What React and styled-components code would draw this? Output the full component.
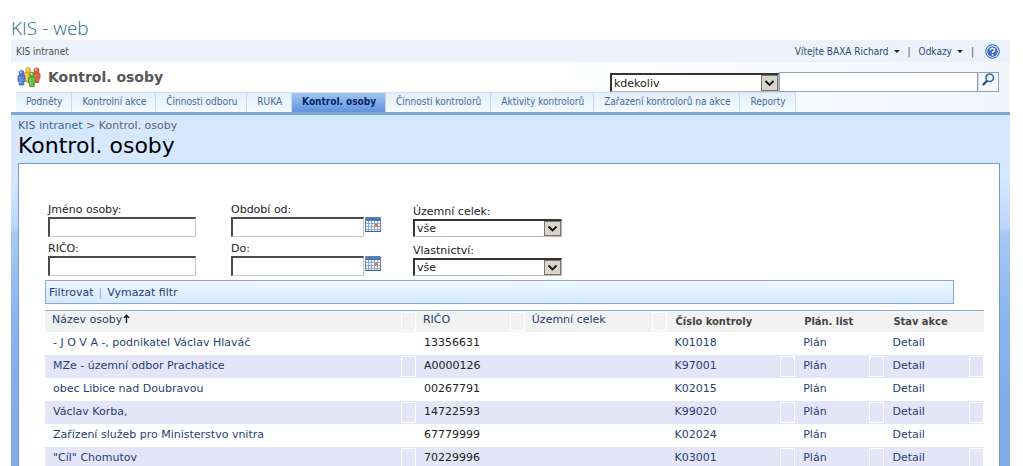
import React from 'react'
import styled, { createGlobalStyle, ThemeProvider } from 'styled-components'

const theme = {
  link: '#1f3f74',
  muted: '#4c4c4c',
  tab: '#47699a',
  page: '#d6e8ff',
  line: '#6f9dd0',
  sans: "'DejaVu Sans', Verdana, sans-serif",
  narrow: "'DejaVu Sans Condensed', 'DejaVu Sans', Tahoma, sans-serif",
  light: "'Open Sans', 'Segoe UI', sans-serif"
}

const GlobalStyle = createGlobalStyle`
  * {
    box-sizing: border-box;
  }
  html {
    overflow: hidden;
  }
  body {
    background: white;
    color: #222;
    font-family: ${theme.sans};
    font-size: 11px;
    margin: 0;
  }
  a {
    color: inherit;
    text-decoration: none;
  }
  button, input, select {
    border-radius: 0;
    font: inherit;
    margin: 0;
  }
`

const Page = styled.div`
  display: flex;
  flex-direction: column;
  min-height: 100vh;
  padding: 16px 13px 0 11px;
`

const AppName = styled.div`
  color: #236d8e;
  font-family: ${({ theme }) => theme.light};
  font-size: 19px;
  font-weight: 300;
  line-height: 24px;
`

const TopBar = styled.div`
  align-items: center;
  background: #ecf2fc;
  color: ${({ theme }) => theme.muted};
  display: flex;
  font-family: ${({ theme }) => theme.narrow};
  font-size: 10px;
  height: 22px;
  justify-content: space-between;
  padding: 0 10px 0 5px;
`

const UserMenu = styled.div`
  align-items: center;
  color: #34496b;
  display: flex;
  gap: 8px;
`

const MenuButton = styled.button`
  align-items: center;
  background: none;
  border: 0;
  color: inherit;
  display: flex;
  gap: 5px;
  padding: 0;
  &:after {
    border: 3px solid transparent;
    border-bottom: 0;
    border-top-color: #222;
    content: '';
  }
`

const HelpButton = styled.button`
  background: none;
  border: 0;
  display: flex;
  margin-left: 3px;
  padding: 0;
`

const Header = styled.header`
  background: linear-gradient(to right, white 50%, #f1f6fe 100%);
  border-bottom: 3px solid #7ea6d6;
`

const TitleRow = styled.div`
  align-items: center;
  display: flex;
  height: 30px;
  justify-content: space-between;
  padding: 0 11px 0 6px;
`

const SiteTitle = styled.div`
  align-items: center;
  color: #585858;
  display: flex;
  font-size: 14px;
  font-weight: bold;
  gap: 6px;
`

const Search = styled.form`
  align-items: flex-end;
  display: flex;
  margin-top: 10px;
`

const SearchInput = styled.input`
  background: white;
  border: 1px solid #8fa3b8;
  height: 20px;
  width: 199px;
`

const SearchButton = styled.button`
  background: #f6faff;
  border: 1px solid #8fa3b8;
  border-left-color: #c8d8ea;
  display: flex;
  height: 20px;
  padding: 0 2px;
  width: 21px;
`

const Tabs = styled.nav`
  display: flex;
  height: 20px;
  padding-left: 5px;
`

const Tab = styled.a`
  background: ${({ $active }) => $active
    ? 'linear-gradient(to bottom, #a3c5f2, #6193dd)'
    : 'linear-gradient(to bottom, #e3effc, #f4faff)'};
  border-right: 1px solid #c3dbee;
  border-top: 1px solid #d3e2f1;
  color: ${({ $active, theme }) => $active ? '#04246b' : theme.tab};
  font-family: ${({ theme }) => theme.narrow};
  font-size: 10px;
  font-weight: ${({ $active }) => $active ? 'bold' : 'normal'};
  line-height: 18px;
  padding: 0 9px 0 10px;
  white-space: nowrap;
`

const Body = styled.main`
  background: linear-gradient(to bottom, ${({ theme }) => theme.page} 60px, #bdd7f9 112px, #a9c9f4 118px, #8db4ee 200px, #82abea 300px);
  display: flex;
  flex: 1;
  flex-direction: column;
  padding: 4px 10px 0 7px;
`

const Breadcrumb = styled.div`
  color: #5a6472;
  line-height: 14px;
  a {
    color: #3d6598;
  }
`

const Heading = styled.h1`
  color: black;
  font-size: 22px;
  font-weight: normal;
  line-height: 26px;
  margin: 0 0 4px;
`

const Panel = styled.section`
  background: white;
  border: 1px solid ${({ theme }) => theme.line};
  border-bottom: 0;
  flex: 1;
  padding: 39px 15px 0 26px;
`

const Filters = styled.form`
  display: grid;
  gap: 5px 0;
  grid-template-columns: 183px 182px 149px;
  padding-left: 3px;
`

const Field = styled.div`
  display: flex;
  flex-direction: column;
  justify-content: flex-end;
  label {
    line-height: 14px;
  }
`

const DateRow = styled.div`
  display: flex;
  gap: 1px;
`

const TextInput = styled.input`
  background: white;
  border: 1px solid #c8c8c8;
  border-left: 2px solid #4a4a4a;
  border-top: 2px solid #4a4a4a;
  height: 20px;
  width: ${({ $short }) => $short ? 133 : 148}px;
`

const CalendarButton = styled.button`
  background: none;
  border: 0;
  display: flex;
  height: 16px;
  padding: 0;
`

const SelectBox = styled.div`
  display: flex;
  position: relative;
  width: ${({ $wide }) => $wide ? 169 : 149}px;
  select {
    appearance: none;
    background: white;
    border: 1px solid #b8b8b8;
    border-left: 2px solid #333;
    border-top: 2px solid #333;
    color: #222;
    height: ${({ $wide }) => $wide ? 19 : 18}px;
    padding: 0 20px 0 2px;
    width: 100%;
  }
  svg {
    background: #d8d5ca;
    border: 1px solid #77756e;
    bottom: 1px;
    pointer-events: none;
    position: absolute;
    right: 1px;
    top: 2px;
  }
`

const Toolbar = styled.div`
  align-items: center;
  background: linear-gradient(to bottom, #f0f7ff, #d3e8ff);
  border: 1px solid #86a9cc;
  color: ${({ theme }) => theme.link};
  display: flex;
  gap: 5px;
  height: 24px;
  margin: 4px 30px 6px 0;
  padding: 0 3px;
  button {
    background: none;
    border: 0;
    color: inherit;
    padding: 0;
  }
  span {
    color: #8fb0d4;
  }
`

const Table = styled.table`
  border-collapse: collapse;
  border-top: 1px solid #8fb0c8;
  color: ${({ theme }) => theme.link};
  table-layout: fixed;
  width: 100%;
  th, td {
    padding: 0;
    text-align: left;
  }
  th {
    background: #f2f2f2;
    font-weight: normal;
  }
`

const Row = styled.tr`
  background: ${({ $odd }) => $odd ? '#e4e5f8' : 'white'};
`

const Cell = styled.div`
  color: ${({ $plain }) => $plain ? '#222' : 'inherit'};
  display: flex;
  height: ${({ $head }) => $head ? 21 : 23}px;
  justify-content: space-between;
  line-height: ${({ $head }) => $head ? 18 : 21}px;
  padding-left: ${({ $head }) => $head ? 7 : 8}px;
  white-space: nowrap;
`

const BoldCell = styled(Cell)`
  color: #444;
  font-family: ${({ theme }) => theme.narrow};
  font-weight: bold;
  line-height: 22px;
  padding-left: 9px;
`

const Slot = styled.span`
  border: 1px solid white;
  margin: 1px 0;
  width: 15px;
`

const SortArrow = styled.svg`
  margin-left: 1px;
`

const tabs = [
  'Podněty',
  'Kontrolní akce',
  'Činnosti odboru',
  'RUKA',
  'Kontrol. osoby',
  'Činnosti kontrolorů',
  'Aktivity kontrolorů',
  'Zařazení kontrolorů na akce',
  'Reporty'
]

const people = [
  { name: '- J O V A -, podnikatel Václav Hlaváč', ico: '13356631', check: 'K01018' },
  { name: 'MZe - územní odbor Prachatice', ico: 'A0000126', check: 'K97001' },
  { name: 'obec Libice nad Doubravou', ico: '00267791', check: 'K02015' },
  { name: 'Václav Korba,', ico: '14722593', check: 'K99020' },
  { name: 'Zařízení služeb pro Ministerstvo vnitra', ico: '67779999', check: 'K02024' },
  { name: '"Cíl" Chomutov', ico: '70229996', check: 'K03001' }
]

const columns = ['39.5%', '11.6%', '15.1%', '13.7%', '9.5%', '10.6%']

const Person = ({ x, y, fill, edge }) => (
  <g fill={fill} stroke={edge} strokeWidth='0.7' transform={`translate(${x} ${y})`}>
    <path d='M0.5 6.5Q0.5 5.3 1.8 5.3H6.2Q7.5 5.3 7.5 6.5V11.5H6.3V15H1.7V11.5H0.5Z' />
    <circle cx='4' cy='2.9' r='2.5' />
    <circle cx='3.4' cy='2.1' r='0.9' fill='white' fillOpacity='0.7' stroke='none' />
    <path d='M2.6 7V13' stroke='white' strokeOpacity='0.5' />
  </g>
)

const PeopleIcon = () => (
  <svg width='25' height='20' viewBox='0 0 25 20' aria-hidden='true'>
    <Person x={7} y={0} fill='#f5bd3c' edge='#cf8c1e' />
    <Person x={15.5} y={0.5} fill='#e8614a' edge='#bb3a2a' />
    <Person x={0.5} y={3} fill='#5585d2' edge='#2f5ca8' />
    <Person x={11} y={4.5} fill='#6cb93d' edge='#3f8a25' />
  </svg>
)

const HelpIcon = () => (
  <svg width='15' height='15' viewBox='0 0 15 15' aria-hidden='true'>
    <circle cx='7.5' cy='7.5' r='6.8' fill='#dfeafa' stroke='#35579c' />
    <circle cx='7.5' cy='7.5' r='5.2' fill='#3c6fc9' />
    <path d='M5.4 6.2Q5.4 4.2 7.5 4.2T9.6 6Q9.6 7 8.4 7.6Q7.5 8 7.5 9' fill='none' stroke='white' strokeWidth='1.5' />
    <circle cx='7.5' cy='10.8' r='0.9' fill='white' />
  </svg>
)

const SearchIcon = () => (
  <svg width='14' height='14' viewBox='0 0 14 14' aria-hidden='true'>
    <circle cx='8.7' cy='4.8' r='3.8' fill='#e9f5ff' stroke='#35678f' strokeWidth='1.5' />
    <path d='M6 7.8L1.8 12' stroke='#2b4f8c' strokeWidth='2.4' />
  </svg>
)

const CalendarIcon = () => (
  <svg width='16' height='16' viewBox='0 0 16 16' aria-hidden='true'>
    <path d='M0.5 0.5H15.5V14.5H0.5Z' fill='#f4f8fd' stroke='#6482a8' />
    <path d='M1 1H15V4H1Z' fill='#4c7ab8' />
    <path d='M1 6.5H15M1 9.5H15M1 12.5H15M3.5 4V14M6.5 4V14M9.5 4V14M12.5 4V14' stroke='#8fabd0' />
    <path d='M10 7H13V10H10Z' fill='#dd7a48' />
    <path d='M0 14.5H16' stroke='#3e5c88' />
  </svg>
)

const Select = ({ id, label, value, wide }) => (
  <SelectBox $wide={wide}>
    <select id={id} aria-label={label} defaultValue={value}>
      <option>{value}</option>
    </select>
    <svg width='17' height={wide ? 16 : 15} viewBox='0 0 15 13' aria-hidden='true'>
      <path d='M3.5 4.5L7.5 8.5L11.5 4.5' fill='none' stroke='#111' strokeWidth='1.8' />
    </svg>
  </SelectBox>
)

const TextField = ({ id, label }) => (
  <Field>
    <label htmlFor={id}>{label}</label>
    <TextInput id={id} type='text' />
  </Field>
)

const DateField = ({ id, label }) => (
  <Field>
    <label htmlFor={id}>{label}</label>
    <DateRow>
      <TextInput id={id} type='text' $short />
      <CalendarButton type='button' aria-label='Kalendář'><CalendarIcon /></CalendarButton>
    </DateRow>
  </Field>
)

const SelectField = ({ id, label }) => (
  <Field>
    <label htmlFor={id}>{label}</label>
    <Select id={id} value='vše' />
  </Field>
)

const PeopleTable = () => (
  <Table>
    <colgroup>
      {columns.map((width, i) => <col key={i} width={width} />)}
    </colgroup>
    <thead>
      <tr>
        <th>
          <Cell $head>
            <a href='#nazev'>
              Název osoby
              <SortArrow width='7' height='9' viewBox='0 0 7 9' aria-hidden='true'>
                <path d='M3.5 9V1.5M1 4L3.5 1.2L6 4' fill='none' stroke='#111' strokeWidth='1.3' />
              </SortArrow>
            </a>
            <Slot />
          </Cell>
        </th>
        <th><Cell $head><a href='#rico'>RIČO</a><Slot /></Cell></th>
        <th><Cell $head><a href='#celek'>Územní celek</a><Slot /></Cell></th>
        <th><BoldCell $head>Číslo kontroly</BoldCell></th>
        <th><BoldCell $head>Plán. list</BoldCell></th>
        <th><BoldCell $head>Stav akce</BoldCell></th>
      </tr>
    </thead>
    <tbody>
      {people.map(({ name, ico, check }, i) => (
        <Row key={ico} $odd={i % 2 === 1}>
          <td><Cell><a href='#osoba'>{name}</a><Slot /></Cell></td>
          <td><Cell $plain>{ico}</Cell></td>
          <td />
          <td><Cell><a href='#kontrola'>{check}</a><Slot /></Cell></td>
          <td><Cell><a href='#plan'>Plán</a><Slot /></Cell></td>
          <td><Cell><a href='#detail'>Detail</a><Slot /></Cell></td>
        </Row>
      ))}
    </tbody>
  </Table>
)

const App = () => (
  <ThemeProvider theme={theme}>
    <GlobalStyle />
    <Page>
      <AppName>KIS - web</AppName>
      <TopBar>
        <a href='#intranet'>KIS intranet</a>
        <UserMenu>
          <MenuButton type='button'>Vítejte BAXA Richard</MenuButton>
          <span>|</span>
          <MenuButton type='button'>Odkazy</MenuButton>
          <span>|</span>
          <HelpButton type='button' aria-label='Nápověda'><HelpIcon /></HelpButton>
        </UserMenu>
      </TopBar>
      <Header>
        <TitleRow>
          <SiteTitle><PeopleIcon />Kontrol. osoby</SiteTitle>
          <Search>
            <Select label='Oblast hledání' value='kdekoliv' wide />
            <SearchInput type='text' aria-label='Hledat' />
            <SearchButton type='button' aria-label='Hledat'><SearchIcon /></SearchButton>
          </Search>
        </TitleRow>
        <Tabs>
          {tabs.map(tab => <Tab key={tab} href='#tab' $active={tab === 'Kontrol. osoby'}>{tab}</Tab>)}
        </Tabs>
      </Header>
      <Body>
        <Breadcrumb><a href='#intranet'>KIS intranet</a> &gt; Kontrol. osoby</Breadcrumb>
        <Heading>Kontrol. osoby</Heading>
        <Panel>
          <Filters>
            <TextField id='jmeno' label='Jméno osoby:' />
            <DateField id='od' label='Období od:' />
            <SelectField id='celek' label='Územní celek:' />
            <TextField id='rico' label='RIČO:' />
            <DateField id='do' label='Do:' />
            <SelectField id='vlastnictvi' label='Vlastnictví:' />
          </Filters>
          <Toolbar>
            <button type='button'>Filtrovat</button>
            <span>|</span>
            <button type='button'>Vymazat filtr</button>
          </Toolbar>
          <PeopleTable />
        </Panel>
      </Body>
    </Page>
  </ThemeProvider>
)

export default App
